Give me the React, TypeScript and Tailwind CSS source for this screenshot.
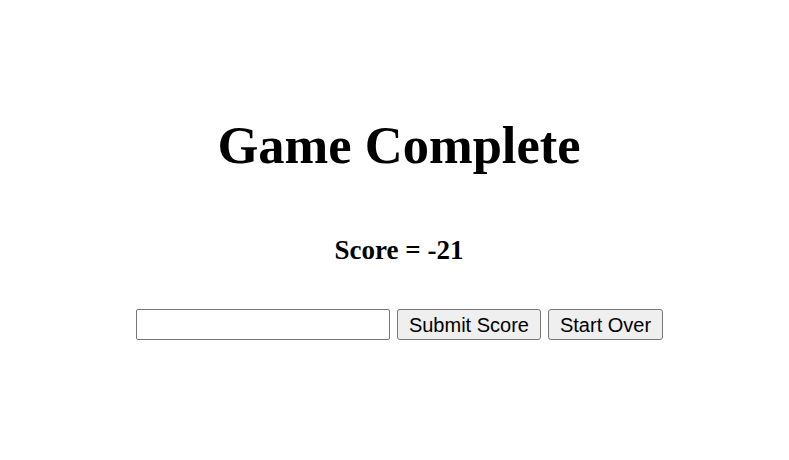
import React from "react";

export default function App() {
  return (
    <div className="w-full min-h-[460px] bg-white text-black text-center" style={{ fontFamily: '"Liberation Serif", "Times New Roman", serif' }}>
      <div className="pt-[106px] pl-[9px]">
        <h1 className="text-[52.5px] font-bold leading-normal m-0">Game Complete</h1>
        <h2 className="mt-[45px] text-[27px] font-bold leading-normal">Score = -21</h2>
        <div className="mt-[39px] pl-[1px] flex justify-center items-center gap-[7px]" style={{ fontFamily: '"Liberation Sans", Arial, sans-serif' }}>
          <input type="text" className="w-[254px] h-[31px] border border-[#767676] rounded-[2px] bg-white px-1 text-[20px] outline-none" />
          <button className="h-[31px] px-[11px] border border-[#767676] rounded-[3px] bg-[#efefef] text-[20px] leading-none text-black">Submit Score</button>
          <button className="h-[31px] px-[11px] border border-[#767676] rounded-[3px] bg-[#efefef] text-[20px] leading-none text-black">Start Over</button>
        </div>
      </div>
    </div>
  );
}
